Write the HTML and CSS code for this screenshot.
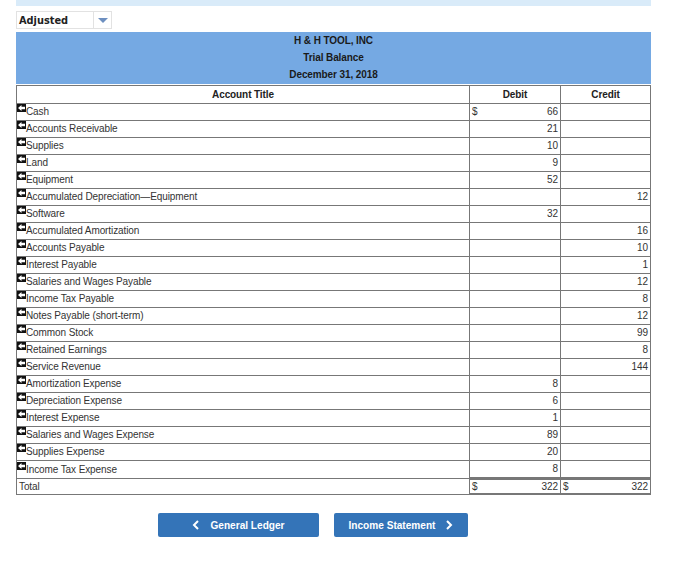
FILE: index.html
```html
<!DOCTYPE html>
<html lang="en">
<head>
    <meta charset="UTF-8">
    <title>Trial Balance</title>
    <link rel="stylesheet" href="styles.css">
</head>
<body>
    <div class="page">
        <div class="top-band"></div>

        <div class="select-box">
            <span class="select-value">Adjusted</span>
            <span class="select-arrow"><span class="arrow-down"></span></span>
        </div>

        <div class="sheet-header">
            <div>H &amp; H TOOL, INC</div>
            <div>Trial Balance</div>
            <div>December 31, 2018</div>
        </div>

        <table class="balance">
            <colgroup>
                <col class="col-title">
                <col class="col-debit">
                <col class="col-credit">
            </colgroup>
            <thead>
                <tr><th>Account Title</th><th>Debit</th><th>Credit</th></tr>
            </thead>
            <tbody>
                <tr><td><span class="drag"><svg viewBox="0 0 9 8"><path d="M1 4 4.5 1V2.7H8V5.3H4.5V7Z"/></svg></span>Cash</td><td><span class="cur">$</span>66</td><td></td></tr>
                <tr><td><span class="drag"><svg viewBox="0 0 9 8"><path d="M1 4 4.5 1V2.7H8V5.3H4.5V7Z"/></svg></span>Accounts Receivable</td><td>21</td><td></td></tr>
                <tr><td><span class="drag"><svg viewBox="0 0 9 8"><path d="M1 4 4.5 1V2.7H8V5.3H4.5V7Z"/></svg></span>Supplies</td><td>10</td><td></td></tr>
                <tr><td><span class="drag"><svg viewBox="0 0 9 8"><path d="M1 4 4.5 1V2.7H8V5.3H4.5V7Z"/></svg></span>Land</td><td>9</td><td></td></tr>
                <tr><td><span class="drag"><svg viewBox="0 0 9 8"><path d="M1 4 4.5 1V2.7H8V5.3H4.5V7Z"/></svg></span>Equipment</td><td>52</td><td></td></tr>
                <tr><td><span class="drag"><svg viewBox="0 0 9 8"><path d="M1 4 4.5 1V2.7H8V5.3H4.5V7Z"/></svg></span>Accumulated Depreciation—Equipment</td><td></td><td>12</td></tr>
                <tr><td><span class="drag"><svg viewBox="0 0 9 8"><path d="M1 4 4.5 1V2.7H8V5.3H4.5V7Z"/></svg></span>Software</td><td>32</td><td></td></tr>
                <tr><td><span class="drag"><svg viewBox="0 0 9 8"><path d="M1 4 4.5 1V2.7H8V5.3H4.5V7Z"/></svg></span>Accumulated Amortization</td><td></td><td>16</td></tr>
                <tr><td><span class="drag"><svg viewBox="0 0 9 8"><path d="M1 4 4.5 1V2.7H8V5.3H4.5V7Z"/></svg></span>Accounts Payable</td><td></td><td>10</td></tr>
                <tr><td><span class="drag"><svg viewBox="0 0 9 8"><path d="M1 4 4.5 1V2.7H8V5.3H4.5V7Z"/></svg></span>Interest Payable</td><td></td><td>1</td></tr>
                <tr><td><span class="drag"><svg viewBox="0 0 9 8"><path d="M1 4 4.5 1V2.7H8V5.3H4.5V7Z"/></svg></span>Salaries and Wages Payable</td><td></td><td>12</td></tr>
                <tr><td><span class="drag"><svg viewBox="0 0 9 8"><path d="M1 4 4.5 1V2.7H8V5.3H4.5V7Z"/></svg></span>Income Tax Payable</td><td></td><td>8</td></tr>
                <tr><td><span class="drag"><svg viewBox="0 0 9 8"><path d="M1 4 4.5 1V2.7H8V5.3H4.5V7Z"/></svg></span>Notes Payable (short-term)</td><td></td><td>12</td></tr>
                <tr><td><span class="drag"><svg viewBox="0 0 9 8"><path d="M1 4 4.5 1V2.7H8V5.3H4.5V7Z"/></svg></span>Common Stock</td><td></td><td>99</td></tr>
                <tr><td><span class="drag"><svg viewBox="0 0 9 8"><path d="M1 4 4.5 1V2.7H8V5.3H4.5V7Z"/></svg></span>Retained Earnings</td><td></td><td>8</td></tr>
                <tr><td><span class="drag"><svg viewBox="0 0 9 8"><path d="M1 4 4.5 1V2.7H8V5.3H4.5V7Z"/></svg></span>Service Revenue</td><td></td><td>144</td></tr>
                <tr><td><span class="drag"><svg viewBox="0 0 9 8"><path d="M1 4 4.5 1V2.7H8V5.3H4.5V7Z"/></svg></span>Amortization Expense</td><td>8</td><td></td></tr>
                <tr><td><span class="drag"><svg viewBox="0 0 9 8"><path d="M1 4 4.5 1V2.7H8V5.3H4.5V7Z"/></svg></span>Depreciation Expense</td><td>6</td><td></td></tr>
                <tr><td><span class="drag"><svg viewBox="0 0 9 8"><path d="M1 4 4.5 1V2.7H8V5.3H4.5V7Z"/></svg></span>Interest Expense</td><td>1</td><td></td></tr>
                <tr><td><span class="drag"><svg viewBox="0 0 9 8"><path d="M1 4 4.5 1V2.7H8V5.3H4.5V7Z"/></svg></span>Salaries and Wages Expense</td><td>89</td><td></td></tr>
                <tr><td><span class="drag"><svg viewBox="0 0 9 8"><path d="M1 4 4.5 1V2.7H8V5.3H4.5V7Z"/></svg></span>Supplies Expense</td><td>20</td><td></td></tr>
                <tr><td><span class="drag"><svg viewBox="0 0 9 8"><path d="M1 4 4.5 1V2.7H8V5.3H4.5V7Z"/></svg></span>Income Tax Expense</td><td>8</td><td></td></tr>
                <tr class="total"><td>Total</td><td><span class="cur">$</span>322</td><td><span class="cur">$</span>322</td></tr>
            </tbody>
        </table>

        <div class="nav-buttons">
            <button class="nav-btn">
                <svg class="chev" viewBox="0 0 8 10"><path d="M6 1 2 5 6 9"/></svg>
                General Ledger
            </button>
            <button class="nav-btn">
                Income Statement
                <svg class="chev" viewBox="0 0 8 10"><path d="M2 1 6 5 2 9"/></svg>
            </button>
        </div>
    </div>
</body>
</html>
```

FILE: styles.css
```css
body {
    margin: 0;
    background-color: #fff;
    font-family: "Liberation Sans", Arial, sans-serif;
    font-size: 10px;
    letter-spacing: -0.1px;
    color: #222;
}

.page {
    width: 635px;
    margin-left: 16px;
}

.top-band {
    height: 6px;
    background-color: #d9ebf9;
}

.select-box {
    display: flex;
    width: 96px;
    height: 18px;
    box-sizing: border-box;
    margin-top: 5px;
    border: 1px solid #e2e2e2;
}

.select-value {
    flex: 1;
    padding-left: 2px;
    font-family: "DejaVu Sans", Verdana, sans-serif;
    font-size: 9.8px;
    font-weight: bold;
    letter-spacing: 0;
    line-height: 17px;
    color: #222;
}

.select-arrow {
    display: flex;
    align-items: center;
    justify-content: center;
    width: 17px;
    border-left: 1px solid #e2e2e2;
}

.arrow-down {
    border-left: 5px solid transparent;
    border-right: 5px solid transparent;
    border-top: 5px solid #6d8fc0;
}

.sheet-header {
    height: 52px;
    margin-top: 3px;
    background-color: #75a9e3;
    text-align: center;
    font-weight: bold;
    line-height: 17px;
    color: #1a1a1a;
}

.balance {
    width: 635px;
    margin-top: 1px;
    border-collapse: collapse;
    table-layout: fixed;
}

.col-debit {
    width: 91px;
}

.col-credit {
    width: 90px;
}

.balance th,
.balance td {
    height: 15px;
    padding: 0 2px 1px;
    border: 1px solid #777;
    line-height: 14px;
    white-space: nowrap;
}

.balance th {
    height: 16px;
    padding: 1px 2px 0;
    font-weight: bold;
    text-align: center;
}

.balance td {
    text-align: right;
    color: #333;
}

.balance td:first-child {
    padding: 0 0 1px;
    text-align: left;
}

.drag {
    display: inline-block;
    width: 9px;
    height: 8px;
    background-color: #111;
    vertical-align: 3px;
    line-height: 0;
}

.drag svg {
    display: block;
    width: 9px;
    height: 8px;
    fill: #fff;
}

.cur {
    float: left;
}

.balance .total td {
    height: 13px;
    padding-bottom: 0;
    line-height: 13px;
    border-top: 3px solid #777;
    border-bottom: 2px solid #777;
}

.balance .total td:first-child {
    padding-left: 2px;
    border-top-width: 1px;
    border-bottom-width: 1px;
}

.nav-buttons {
    display: flex;
    gap: 15px;
    margin: 18px 0 0 142px;
}

.nav-btn {
    display: flex;
    align-items: center;
    justify-content: center;
    gap: 10px;
    height: 24px;
    padding: 0;
    border: none;
    border-radius: 2px;
    background-color: #3474b8;
    color: #fff;
    font-family: "Liberation Sans", Arial, sans-serif;
    font-size: 10.1px;
    font-weight: bold;
}

.nav-btn:first-child {
    width: 161px;
}

.nav-btn:last-child {
    width: 134px;
}

.chev {
    width: 8px;
    height: 10px;
    fill: none;
    stroke: #fff;
    stroke-width: 2;
}
```
